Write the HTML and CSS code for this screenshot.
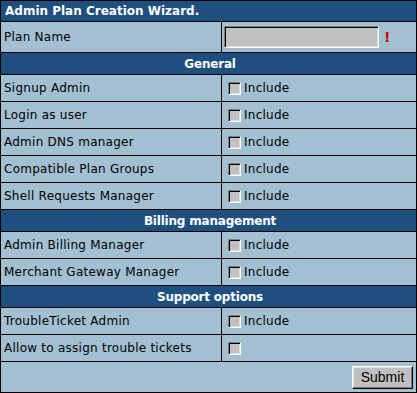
FILE: index.html
```html
<!doctype html>
<html lang="en">
<head>
<meta charset="UTF-8">
<title>Admin Plan Creation Wizard</title>
<link rel="stylesheet" href="styles.css">
</head>
<body>
<form action="#" onsubmit="return false">
	<table class="wizard">
		<colgroup>
			<col class="col_label">
			<col class="col_value">
		</colgroup>
		<tr class="title"><td colspan="2">Admin Plan Creation Wizard.</td></tr>
		<tr class="tall">
			<td>Plan Name</td>
			<td><input type="text" class="plan_name"><span class="req">!</span></td>
		</tr>
		<tr class="section"><td colspan="2">General</td></tr>
		<tr><td>Signup Admin</td><td><label><input type="checkbox"> Include</label></td></tr>
		<tr><td>Login as user</td><td><label><input type="checkbox"> Include</label></td></tr>
		<tr><td>Admin DNS manager</td><td><label><input type="checkbox"> Include</label></td></tr>
		<tr><td>Compatible Plan Groups</td><td><label><input type="checkbox"> Include</label></td></tr>
		<tr><td>Shell Requests Manager</td><td><label><input type="checkbox"> Include</label></td></tr>
		<tr class="section"><td colspan="2">Billing management</td></tr>
		<tr><td>Admin Billing Manager</td><td><label><input type="checkbox"> Include</label></td></tr>
		<tr><td>Merchant Gateway Manager</td><td><label><input type="checkbox"> Include</label></td></tr>
		<tr class="section"><td colspan="2">Support options</td></tr>
		<tr><td>TroubleTicket Admin</td><td><label><input type="checkbox"> Include</label></td></tr>
		<tr><td>Allow to assign trouble tickets</td><td><label><input type="checkbox"></label></td></tr>
		<tr class="tall"><td colspan="2" class="buttons"><button type="submit">Submit</button></td></tr>
	</table>
</form>
</body>
</html>
```

FILE: styles.css
```css
body{
	margin:0;
	background:#a2c0d1;
	font-family:"DejaVu Sans",Verdana,sans-serif;
	font-size:12px;
	-webkit-font-smoothing:none;
}
form{
	margin:0;
}
.wizard{
	width:417px;
	border-collapse:collapse;
	table-layout:fixed;
	background:#a2c0d1;
	color:#000;
}
.col_label{
	width:221px;
}
.wizard td{
	border:1px solid #000;
	height:26px;
	padding:0 0 0 3px;
	vertical-align:middle;
	white-space:nowrap;
	letter-spacing:0.25px;
}
.wizard tr.tall td{
	height:30px;
}
.wizard tr.title td{
	height:20px;
	background:#1f4f7e;
	color:#fff;
	font-weight:bold;
	padding-left:4px;
	letter-spacing:0;
}
.wizard tr.section td{
	height:21px;
	background:#1f4f7e;
	color:#fff;
	font-weight:bold;
	text-align:center;
	letter-spacing:-0.2px;
}
label{
	display:flex;
	align-items:center;
	gap:3px;
	padding-left:3px;
}
input[type=checkbox]{
	appearance:none;
	-webkit-appearance:none;
	margin:0;
	width:13px;
	height:13px;
	background:#c0c0c0;
	border:1px solid;
	border-color:#808080 #fff #fff #808080;
	box-shadow:inset 1px 1px #000, inset -1px -1px #dfdfdf;
}
.plan_name{
	box-sizing:border-box;
	width:155px;
	height:22px;
	margin:0 0 0 -1px;
	padding:1px 3px;
	background:#c0c0c0;
	border:1px solid;
	border-color:#808080 #fff #fff #808080;
	box-shadow:inset 1px 1px #000, inset -1px -1px #dfdfdf;
	vertical-align:middle;
	font:12px "DejaVu Sans",sans-serif;
}
.req{
	color:#d00000;
	font-weight:bold;
	font-size:14px;
	margin-left:5px;
	vertical-align:middle;
}
.buttons{
	text-align:right;
}
.wizard td.buttons{
	padding-right:3px;
}
button{
	width:61px;
	height:23px;
	margin:0;
	padding:0;
	background:#c0c0c0;
	border:1px solid;
	border-color:#fff #000 #000 #fff;
	box-shadow:inset -1px -1px #808080, inset 1px 1px #dfdfdf;
	font-family:"Liberation Sans",Arial,sans-serif;
	font-size:14px;
	color:#000;
	vertical-align:middle;
	letter-spacing:0;
}
```
